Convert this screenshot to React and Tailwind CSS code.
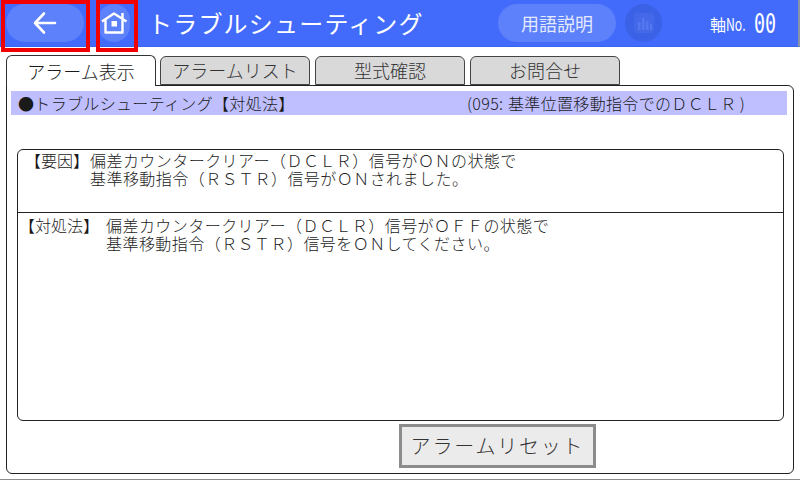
import React from 'react';

const jp = "font-['Noto_Sans_CJK_JP','Noto_Sans_CJK_SC',sans-serif]";

const tabs = ['アラームリスト', '型式確認', 'お問合せ'];

const App = () => {
    return (
        <div className={`${jp} relative w-[800px] h-[480px] overflow-hidden bg-white flex flex-col text-[#1a1a1a] font-light`}>
            {/* header */}
            <div className="h-[47px] shrink-0 bg-[#426bfb] border-r-2 border-b border-r-[#8a94a8] border-b-[#3a63f0] flex items-center pl-[6px] text-white">
                <div className="w-[78px] h-[38px] rounded-full bg-[#5d80fb] flex items-center justify-center">
                    <svg width="26" height="26" viewBox="0 0 26 26" fill="none" stroke="white" strokeWidth="2.6" strokeLinecap="round" strokeLinejoin="round">
                        <path d="M23 13H3M12 3.5 3 13l9 9.5" />
                    </svg>
                </div>
                <div className="ml-[14px] w-[32px] h-[38px] rounded-full bg-[#5d80fb] flex items-center justify-center">
                    <svg width="27" height="22" viewBox="0 0 27 22" fill="none" stroke="white" strokeWidth="2.4" strokeLinejoin="round">
                        <path d="M1 9.5 13 1.5l12.5 8M4.5 8v12.5h17V8M21.5 1v6" />
                        <rect x="10.5" y="9" width="5.5" height="5.5" fill="white" stroke="none" />
                    </svg>
                </div>
                <div className="ml-[18px] text-[24px] tracking-[1.2px] leading-none whitespace-nowrap w-[350px] font-normal">トラブルシューティング</div>
                <div className="w-[118px] h-[38px] rounded-full bg-[#5d80fb] flex items-center justify-center text-[18px] text-[#e4eaff] font-normal">用語説明</div>
                <div className="ml-[9px] w-[37px] h-[38px] rounded-full bg-[#3b62e6] flex items-center justify-center">
                    <svg width="24" height="24" viewBox="0 0 24 24" fill="#5478f0">
                        <rect x="2" y="2" width="20" height="20" rx="3" fill="#4468e8" />
                        <rect x="6" y="11" width="2.5" height="8" />
                        <rect x="10" y="7" width="2.5" height="12" />
                        <rect x="14" y="10" width="2.5" height="9" />
                        <rect x="18" y="13" width="2" height="6" />
                    </svg>
                </div>
                <div className="ml-[48px] w-[44px] text-[16px] font-normal whitespace-nowrap leading-none">軸<span className="inline-block origin-left scale-x-[0.72] w-[20px] text-[17px]">No.</span></div>
                <div className="font-['DejaVu_Sans_Mono',monospace] text-[27px] leading-none origin-left scale-x-[0.68] whitespace-nowrap">00</div>
            </div>

            {/* tabs */}
            <div className="h-[38px] shrink-0 pl-[6px] flex items-end">
                <div className="relative z-10 w-[150px] h-[31px] -mb-px bg-white border border-b-0 border-[#333] rounded-t-[6px] flex items-center justify-center text-[18px]">アラーム表示</div>
                <div className="flex gap-[5px] ml-[4px]">
                    {tabs.map((t) => (
                        <div key={t} className="w-[150px] h-[29px] bg-[#d9d9d9] border border-[#444] rounded-t-[6px] flex items-center justify-center text-[18px] text-[#333]">{t}</div>
                    ))}
                </div>
            </div>

            {/* panel */}
            <div className="ml-[6px] w-[788px] h-[389px] border border-[#222] rounded-tr-[6px] rounded-b-[6px] px-[4px] pt-[5px]">
                <div className="h-[24px] w-[776px] bg-[#bfbfff] flex items-center pl-[7px] text-[16px] tracking-[0.33px] leading-none whitespace-nowrap">
                    <span className="w-[449px]">●トラブルシューティング【対処法】</span>
                    <span className="inline-block w-[41px]">(095:</span>
                    <span>基準位置移動指令でのＤＣＬＲ</span>
                    <span className="ml-[3px]">)</span>
                </div>

                <div className="mt-[34px] ml-[6px] w-[767px] h-[272px] border border-[#222] rounded-[6px] flex flex-col text-[16px] tracking-[0.45px] leading-[18px]">
                    <div className="h-[63px] shrink-0 border-b border-[#222] pt-[1px] pl-[7px] flex">
                        <span className="w-[65px] shrink-0 whitespace-nowrap tracking-normal">【要因】</span>
                        <p className="whitespace-nowrap">偏差カウンタークリアー（ＤＣＬＲ）信号がＯＮの状態で<br />基準移動指令（ＲＳＴＲ）信号がＯＮされました。</p>
                    </div>
                    <div className="flex-1 pt-[3px] pl-[1px] flex">
                        <span className="w-[87px] shrink-0 whitespace-nowrap tracking-normal">【対処法】</span>
                        <p className="whitespace-nowrap">偏差カウンタークリアー（ＤＣＬＲ）信号がＯＦＦの状態で<br />基準移動指令（ＲＳＴＲ）信号をＯＮしてください。</p>
                    </div>
                </div>

                <div className="mt-[3px] ml-[388px] w-[197px] h-[44px] bg-[#ebebeb] border-[3px] border-[#8c8c8c] flex items-center justify-center text-[20px] tracking-[1.8px] text-[#333]">アラームリセット</div>
            </div>

            <div className="mt-auto h-px bg-[#8c8c8c]" />

            {/* red highlight marks lying over the header */}
            <div className="absolute left-[1px] top-0 w-[89px] h-[52px] border-4 border-[#f00000]" />
            <div className="absolute left-[96px] top-0 w-[42px] h-[52px] border-4 border-[#f00000]" />
        </div>
    );
};

export default App;
